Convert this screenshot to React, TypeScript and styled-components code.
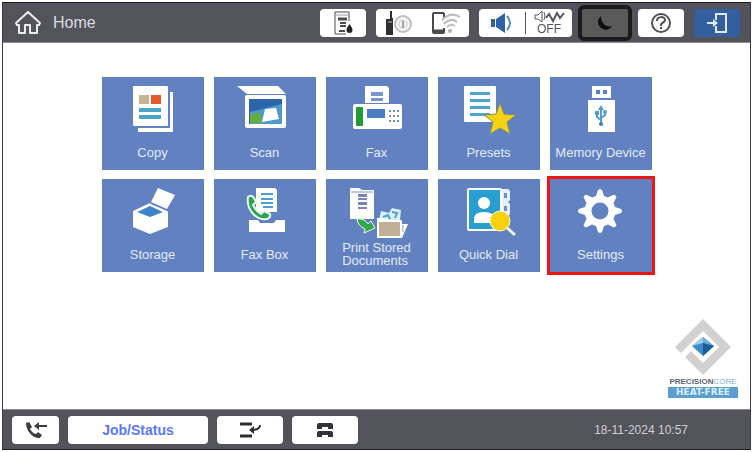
import React from "react";
import styled, { createGlobalStyle, css } from "styled-components";

const GlobalStyle = createGlobalStyle`
  *, *::before, *::after { box-sizing: border-box; }
  body {
    margin: 0;
    background: #fff;
    font-family: "Liberation Sans", Arial, sans-serif;
  }
  button { font-family: inherit; cursor: pointer; }
  svg { display: block; flex: none; }
`;

const Screen = styled.div`
  display: flex;
  flex-direction: column;
  min-height: calc(100vh - 4px);
  margin: 2px 1px 2px 2px;
  border: 1px solid #3c3c40;
  border-top-color: #1d1d22;
  border-bottom-color: #1d1d22;
  background: #fff;
`;

const bar = css`
  display: flex;
  align-items: center;
  background: #53535b;
`;

const TopBar = styled.header`
  ${bar}
  height: 40px;
  padding: 0 10px 0 11px;
  border-bottom: 1px solid #8b8b90;
`;

const BottomBar = styled.footer`
  ${bar}
  gap: 9px;
  height: 40px;
  padding: 0 62px 0 9px;
  border-top: 1px solid #8b8b90;
`;

const Title = styled.h1`
  margin: 0 auto 0 11px;
  color: #dcdce0;
  font-size: 16px;
  font-weight: 400;
  line-height: 20px;
`;

const Tools = styled.nav`
  display: flex;
  gap: 10px;
`;

const BarButton = styled.button<{ $width?: number; $tone?: "dark" | "blue" }>`
  display: flex;
  align-items: center;
  justify-content: center;
  width: ${(p) => p.$width ?? 46}px;
  height: 28px;
  padding: 0;
  border: 0;
  border-radius: 4px;
  background: #fff;
  color: #3f3f44;
  ${(p) =>
    p.$tone === "dark" &&
    css`
      border-radius: 2px;
      background: #5a5a5a;
      color: #101010;
      outline: 4px solid #1b1b1e;
    `}
  ${(p) =>
    p.$tone === "blue" &&
    css`
      border-radius: 2px;
      background: #335f9f;
      color: #dfeaf8;
    `}
`;

const JobButton = styled(BarButton)`
  color: #5c79ee;
  font-size: 14px;
  font-weight: 700;
`;

const Segment = styled.span`
  display: flex;
  flex: 1;
  flex-direction: column;
  align-items: center;
  justify-content: center;
`;

const Divider = styled.span`
  width: 1px;
  height: 22px;
  background: #55555c;
`;

const OffText = styled.span`
  color: #55555c;
  font-size: 12px;
  line-height: 12px;
`;

const Clock = styled.time`
  margin-left: auto;
  color: #d0d0d4;
  font-size: 12px;
  line-height: 16px;
`;

const Main = styled.main`
  display: flex;
  flex: 1;
  flex-direction: column;
  padding: 34px 12px 11px;
`;

const Tiles = styled.div`
  display: grid;
  grid-template-columns: repeat(5, minmax(0, 102px));
  gap: 9px 10px;
  justify-content: center;
`;

const Tile = styled.button<{ $marked?: boolean }>`
  display: flex;
  flex-direction: column;
  align-items: center;
  height: 93px;
  padding: 0;
  border: 0;
  background: #6181c1;
  outline: ${(p) => (p.$marked ? "3px solid #ef1515" : "none")};
`;

const TileLabel = styled.span`
  display: flex;
  align-items: center;
  height: 26px;
  color: #e4ebf8;
  font-size: 13px;
  line-height: 13px;
  text-align: left;
  white-space: pre;
`;

const Brand = styled.div`
  display: flex;
  flex-direction: column;
  align-items: center;
  align-self: flex-end;
  width: 70px;
  margin-top: auto;
`;

const BrandName = styled.span`
  margin-top: 1px;
  color: #5b6670;
  font-size: 8px;
  font-weight: 700;
  line-height: 10px;

  span {
    color: #7fb2d6;
    font-weight: 400;
  }
`;

const BrandBar = styled.span`
  align-self: stretch;
  background: #5b9fd0;
  color: #d9efff;
  font-family: "DejaVu Sans", sans-serif;
  font-size: 9px;
  font-weight: 700;
  line-height: 11px;
  text-align: center;
`;

const HomeIcon = () => (
  <svg width="28" height="26" viewBox="0 0 28 26" fill="none" stroke="#ececf0" strokeWidth="2" strokeLinejoin="round" strokeLinecap="round">
    <path d="M2 13 14 2l12 11-1 2h-2v8h-7v-8h-5v8H5v-8H3z" />
  </svg>
);

const PaperIcon = () => (
  <svg width="22" height="24" viewBox="0 0 22 24" fill="none" stroke="#4b4b50">
    <path d="M17 10V1H3v22h11" />
    <path d="M3 4h14" stroke="#99999d" />
    <path d="M6 8h9" strokeWidth="3" />
    <path d="M8 12h6M8 15h6M7 20h6" strokeWidth="2" />
    <path d="M17.500 13c2 3 3 4 3 6a3 3 0 0 1-6 0c0-2 1-3 3-6z" fill="#222" stroke="none" />
  </svg>
);

const NetworkIcon = () => (
  <svg width="28" height="26" viewBox="0 0 28 26">
    <path d="M5 1h2v7h1v17H1V9h4z" fill="#2f2f33" />
    <path d="M3 12h4" stroke="#bbb" />
    <circle cx="18" cy="14" r="8" fill="#f3f3f3" stroke="#bfbfc2" strokeWidth="2" />
    <circle cx="18" cy="14" r="4" fill="none" stroke="#cfcfd2" />
    <path d="M18 11v7" stroke="#a5a5a8" strokeWidth="2" />
  </svg>
);

const PhoneWifiIcon = () => (
  <svg width="30" height="24" viewBox="0 0 30 24" fill="none">
    <path d="M13 2H3q-1 0-1 1v18q0 1 1 1h9q1 0 1-1v-4M13 2v5" stroke="#4a4a4e" strokeWidth="2" />
    <path d="M2 20h11" stroke="#4a4a4e" strokeWidth="3" />
    <g stroke="#bdbdc0" strokeWidth="2">
      <path d="M11 9q9-9 18-3" />
      <path d="M13 13q7-7 13-2" />
      <path d="M16 16q4-4 8-1" />
    </g>
    <circle cx="19" cy="20" r="2" fill="#b0b0b3" />
  </svg>
);

const SpeakerIcon = () => (
  <svg width="24" height="20" viewBox="0 0 24 20" fill="#2d63a6">
    <path d="M1 6h4v8H1zM6 6l9-6v20l-9-6z" />
    <path d="M17 3q6 7 0 14" fill="none" stroke="#5b8ac4" strokeWidth="2" />
  </svg>
);

const SoundWaveIcon = () => (
  <svg width="32" height="13" viewBox="0 0 32 13" fill="none" stroke="#55555c">
    <path d="M2 5h3l4-4v11L5 9H2zM11 2q2 4 0 8" />
    <path d="m13 8 3-4 4 7 4-8 3 5 4-5" strokeWidth="2" />
  </svg>
);

const MoonIcon = () => (
  <svg width="16" height="16" viewBox="0 0 16 16" fill="currentColor">
    <path d="M4 1C0 4 0 10 4 13c4 3 9 2 11-2C9 13 4 8 4 1z" />
  </svg>
);

const HelpIcon = () => (
  <svg width="22" height="22" viewBox="0 0 22 22" fill="none" stroke="#505055">
    <circle cx="11" cy="11" r="9" strokeWidth="2" />
    <path d="M7 9c0-5 8-5 8-1 0 3-4 2-4 5v1" strokeWidth="2" />
    <path d="M11 15v2" strokeWidth="2" />
  </svg>
);

const LoginIcon = () => (
  <svg width="22" height="20" viewBox="0 0 22 20" fill="none" stroke="currentColor" strokeWidth="2">
    <path d="M10 7V1h10v18H10v-6" />
    <path d="M1 10h9" />
    <path d="m7 6 5 4-5 4z" fill="currentColor" stroke="none" />
  </svg>
);

const CallInIcon = () => (
  <svg width="22" height="18" viewBox="0 0 22 18" fill="#3e3e42">
    <path d="M1 2 4 1l3 5-2 2q2 4 6 5l2-2 4 3-2 3C8 18 1 10 1 2z" />
    <path d="m9 5 5-4v3h8v2h-8v3z" />
  </svg>
);

const ReceiveIcon = () => (
  <svg width="24" height="18" viewBox="0 0 24 18" fill="none" stroke="#2e2e32">
    <path d="M2 3h12M2 15h12" strokeWidth="3" />
    <path d="M22 4q0 5-9 5" strokeWidth="2" />
    <path d="m11 9 5-4v8z" fill="#2e2e32" stroke="none" />
  </svg>
);

const HandsetsIcon = () => (
  <svg width="18" height="16" viewBox="0 0 18 16" fill="#333337">
    <path d="M1 3q0-2 2-2h12q2 0 2 2v4h-5V5H6v2H1zM1 11q0-2 2-2h12q2 0 2 2v4h-5v-2H6v2H1z" />
  </svg>
);

const copyArt = (
  <>
    <path d="M36 15h35v40H36z" fill="#fff" />
    <path d="M31 9h37v42H31z" fill="#6181c1" />
    <rect x="31" y="9" width="35" height="40" rx="1" fill="#fff" />
    <path d="M37 18h10v9H37z" fill="#c9b193" />
    <path d="M49 18h10v9H49z" fill="#e4582c" />
    <path d="M37 31h22v4H37zM37 38h22v4H37z" fill="#4ba5c9" />
  </>
);

const scanArt = (
  <>
    <path d="M23 9h41l8 8H33z" fill="#fff" />
    <rect x="31" y="18" width="41" height="33" rx="2" fill="#fff" />
    <path d="M35 22h33v25H35z" fill="#2d66a8" />
    <path d="M36 35 68 27v20H36z" fill="#4d9acb" />
    <path d="m36 38 9-3 4 11H36z" fill="#67ad3d" />
    <path d="m51 32 11-1 3 11-17 3z" fill="#fff" />
  </>
);

const faxArt = (
  <>
    <path d="M39 9h22l2 2v15H39z" fill="#fff" />
    <path d="M45 15h12v4H45zM45 21h12v3H45z" fill="#7795cc" />
    <rect x="27" y="27" width="49" height="25" rx="2" fill="#fff" />
    <rect x="30" y="30" width="7" height="19" rx="1" fill="#229a35" />
    <path d="M41 32h18v9H41z" fill="#4a7cc4" />
    <path d="M64 33v12M68 33v12M72 33v12" stroke="#6d8fc9" strokeWidth="2" strokeDasharray="2 3" />
  </>
);

const presetsArt = (
  <>
    <rect x="26" y="9" width="32" height="36" rx="1" fill="#fff" />
    <path d="M32 15h20v3H32zM32 22h20v3H32zM32 29h20v3H32zM32 36h20v3H32z" fill="#4fa5cf" />
    <path d="m62 26 4 11 12 1-9 7 3 12-10-6-10 6 3-12-9-7 12-1z" fill="#f5d312" stroke="#7f8f76" />
  </>
);

const memoryArt = (
  <>
    <path d="M42 9h19v12H42zM38 23h27v32H38z" fill="#fff" />
    <path d="M46 13h4v4h-4zM53 13h4v4h-4z" fill="#5681c0" />
    <g stroke="#529dcc" strokeWidth="2" fill="none">
      <path d="M51 32v14M51 43l-4-3v-4M51 41l4-3v-3" />
    </g>
    <path d="m51 28 3 5h-6zM45 34h4v4h-4z" fill="#529dcc" />
    <circle cx="55" cy="35" r="2" fill="#529dcc" />
    <circle cx="51" cy="47" r="2" fill="#3c82bd" />
  </>
);

const storageArt = (
  <>
    <path d="m31 32 17-8 18 8v16l-18 7-17-7z" fill="#fff" />
    <path d="m35 33 13-6 13 6-13 5z" fill="#3f83ca" />
    <path d="m49 23 7-14 17 7-8 14z" fill="#fff" />
    <path d="m48 24 18 8" stroke="#6181c1" />
  </>
);

const faxBoxArt = (
  <>
    <path d="M42 9h19l2 2v22H42z" fill="#fff" />
    <path d="M47 14h12v2H47zM47 19h12v2H47zM47 23h12v2H47zM49 27h10v2H49z" fill="#4f9fce" />
    <path d="M34 18q3-3 6 1l2 4-3 3q3 6 8 9l3-3 6 3q1 4-3 5C42 42 32 30 34 18z" fill="#2ca253" stroke="#e8fbe9" strokeWidth="2" strokeLinejoin="round" />
    <path d="M35 41h9l2 3h14l2-3h9v12H35z" fill="#fff" />
  </>
);

const printStoredArt = (
  <>
    <path d="M24 9h9l3 2h12v29H24z" fill="#fff" />
    <path d="M25 13h22" stroke="#7795cc" />
    <path d="M32 15h9v3h-9zM32 19h9v2h-9zM32 23h9v3h-9zM32 28h9v2h-9z" fill="#7a83bd" />
    <path d="M31 40q7-1 11 5l3-3 4 7-11 5 1-4q-7-3-8-10z" fill="#35a54a" stroke="#e8fbe9" />
    <path d="m53 41 2-9 8 2 3-5 9 2-1 10z" fill="#d9f1fb" />
    <path d="m57 38 5-2 2 4M66 33l5 1-2 5" stroke="#4da2d0" strokeWidth="2" fill="none" />
    <path d="M51 39h8l3 2h14v4h6l-6 14H51z" fill="#fff" />
    <path d="M53 43h21v14H53z" fill="#c3af97" />
    <path d="M77 46v7" stroke="#9d9b9d" />
  </>
);

const quickDialArt = (
  <>
    <path d="M63 10h6q3 0 3 3v8l-2 2 2 2v9q0 3-3 3h-6z" fill="#e8f1fb" />
    <path d="M66 14h3v5h-3zM66 27h3v5h-3z" fill="#6d90c9" />
    <rect x="29" y="9" width="35" height="43" rx="2" fill="#fff" />
    <path d="M31 11h31v39H31z" fill="#299fd0" />
    <circle cx="46" cy="24" r="6" fill="#fff" />
    <path d="M36 44v-4q0-7 10-7t11 7v4z" fill="#fff" />
    <path d="m68 48 9 8" stroke="#f3f1e6" strokeWidth="3" />
    <circle cx="62" cy="42" r="10" fill="#f8d10d" stroke="#f8f4d4" />
  </>
);

const settingsArt = (
  <g>
    {[0, 45, 90, 135, 180, 225, 270, 315].map((angle) => (
      <path key={angle} d="M48 11q2-2 4 0l3 9h-10z" fill="#fff" transform={`rotate(${angle} 50 32)`} />
    ))}
    <circle cx="50" cy="32" r="12" fill="none" stroke="#fff" strokeWidth="7" />
  </g>
);

const functions: { label: string; art: React.ReactNode; marked?: boolean }[] = [
  { label: "Copy", art: copyArt },
  { label: "Scan", art: scanArt },
  { label: "Fax", art: faxArt },
  { label: "Presets", art: presetsArt },
  { label: "Memory Device", art: memoryArt },
  { label: "Storage", art: storageArt },
  { label: "Fax Box", art: faxBoxArt },
  { label: "Print Stored\nDocuments", art: printStoredArt },
  { label: "Quick Dial", art: quickDialArt },
  { label: "Settings", art: settingsArt, marked: true },
];

const BrandMark = () => (
  <svg width="58" height="57" viewBox="0 0 58 57">
    <path d="M1 28 29 0l28 28-28 28-18-18 6-6 12 12 16-16-16-16L7 34z" fill="#d3d0d0" />
    <path d="m18 27 11-9 11 9-11 10z" fill="#3c8cc8" />
    <path d="m18 27 11-9v6z" fill="#9accea" />
    <path d="m40 27-11-9v6z" fill="#66aedb" />
    <path d="m40 27-11-3v13z" fill="#1c5c97" />
  </svg>
);

export default function App() {
  return (
    <>
      <GlobalStyle />
      <Screen>
        <TopBar>
          <HomeIcon />
          <Title>Home</Title>
          <Tools aria-label="Device">
            <BarButton aria-label="Paper and supplies"><PaperIcon /></BarButton>
            <BarButton $width={93} aria-label="Network">
              <Segment><NetworkIcon /></Segment>
              <Segment><PhoneWifiIcon /></Segment>
            </BarButton>
            <BarButton $width={93} aria-label="Sound">
              <Segment><SpeakerIcon /></Segment>
              <Divider />
              <Segment>
                <SoundWaveIcon />
                <OffText>OFF</OffText>
              </Segment>
            </BarButton>
            <BarButton $tone="dark" aria-label="Sleep"><MoonIcon /></BarButton>
            <BarButton aria-label="Help"><HelpIcon /></BarButton>
            <BarButton $tone="blue" aria-label="Log in"><LoginIcon /></BarButton>
          </Tools>
        </TopBar>
        <Main>
          <Tiles>
            {functions.map(({ label, art, marked }) => (
              <Tile key={label} $marked={marked}>
                <svg width="102" height="62" viewBox="0 0 102 62" aria-hidden="true">{art}</svg>
                <TileLabel>{label}</TileLabel>
              </Tile>
            ))}
          </Tiles>
          <Brand>
            <BrandMark />
            <BrandName>PRECISION<span>CORE</span></BrandName>
            <BrandBar>HEAT-FREE</BrandBar>
          </Brand>
        </Main>
        <BottomBar>
          <BarButton $width={47} aria-label="Incoming call"><CallInIcon /></BarButton>
          <JobButton $width={140}>Job/Status</JobButton>
          <BarButton $width={66} aria-label="Received documents"><ReceiveIcon /></BarButton>
          <BarButton $width={66} aria-label="On hook"><HandsetsIcon /></BarButton>
          <Clock dateTime="2024-11-18T10:57">18-11-2024 10:57</Clock>
        </BottomBar>
      </Screen>
    </>
  );
}
